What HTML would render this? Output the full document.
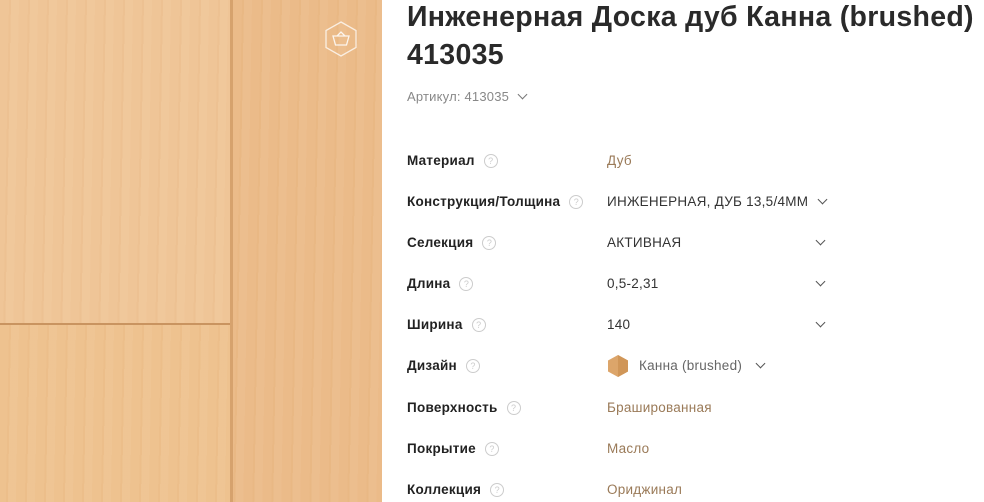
<!DOCTYPE html>
<html><head><meta charset="utf-8"><style>
body{margin:0;width:984px;height:502px;overflow:hidden;background:#fff;font-family:"Liberation Sans","DejaVu Sans",sans-serif;position:relative}
.wood{position:absolute;left:0;top:0;width:382px;height:502px;background:#e8b582}
.p{position:absolute;background-image:repeating-linear-gradient(91deg,rgba(255,255,255,0) 0 9px,rgba(200,130,60,.06) 9px 11px,rgba(255,240,220,.06) 11px 19px);}
.p1{left:0;top:0;width:230px;height:323px;background-color:#efc597}
.p2{left:0;top:325px;width:230px;height:177px;background-color:#eec28f}
.p3{left:233px;top:0;width:149px;height:502px;background-color:#ebbb89}
.seam{position:absolute;background:#c99460}
h1{position:absolute;left:407px;top:-2px;margin:0;font-size:28.5px;line-height:38px;font-weight:bold;color:#2a2a2a;letter-spacing:.3px}
.art{position:absolute;left:407px;top:89px;font-size:13px;color:#888;letter-spacing:.2px}
.row{position:absolute;left:407px;font-size:13.5px;height:20px;line-height:20px;letter-spacing:.25px}
.l{position:absolute;left:0;font-weight:bold;color:#222;white-space:nowrap}
.q{display:inline-block;width:12px;height:12px;border:1px solid #ccc;border-radius:50%;font-size:9px;line-height:12px;text-align:center;color:#ccc;font-weight:normal;margin-left:9px;vertical-align:1px;letter-spacing:0}
.v{position:absolute;left:200px;white-space:nowrap;color:#333}
.g{color:#9a7a58}
.c{position:absolute;left:410px;top:4px;width:6px;height:6px;border-right:1.3px solid #555;border-bottom:1.3px solid #555;transform:rotate(45deg)}
</style></head><body>
<div class="wood">
<div class="p p1"></div><div class="p p2"></div><div class="p p3"></div>
<div class="seam" style="left:0;top:323px;width:231px;height:2px"></div>
<div class="seam" style="left:230px;top:0;width:3px;height:502px;background:#d6a26d"></div>
<svg style="position:absolute;left:322px;top:20px" width="38" height="38" viewBox="0 0 38 38"><polygon points="19,2 34,10.5 34,27.5 19,36 4,27.5 4,10.5" fill="none" stroke="rgba(255,255,255,.75)" stroke-width="1.3"/><path d="M11 16h16l-2.5 9h-11z M15 16l4-4 4 4" fill="none" stroke="rgba(255,255,255,.85)" stroke-width="1.3"/></svg>
</div>
<h1>Инженерная Доска дуб Канна (brushed)<br>413035</h1>
<div class="art">Артикул: 413035 <span style="display:inline-block;width:6px;height:6px;border-right:1.3px solid #777;border-bottom:1.3px solid #777;transform:rotate(45deg);margin-left:6px;vertical-align:3px"></span></div>

<div class="row" style="top:151px"><span class="l">Материал<span class="q">?</span></span><span class="v g">Дуб</span></div>
<div class="row" style="top:192px"><span class="l">Конструкция/Толщина<span class="q">?</span></span><span class="v">ИНЖЕНЕРНАЯ, ДУБ 13,5/4ММ</span><span class="c" style="left:412px"></span></div>
<div class="row" style="top:233px"><span class="l">Селекция<span class="q">?</span></span><span class="v">АКТИВНАЯ</span><span class="c"></span></div>
<div class="row" style="top:274px"><span class="l">Длина<span class="q">?</span></span><span class="v">0,5-2,31</span><span class="c"></span></div>
<div class="row" style="top:315px"><span class="l">Ширина<span class="q">?</span></span><span class="v">140</span><span class="c"></span></div>
<div class="row" style="top:356px"><span class="l">Дизайн<span class="q">?</span></span>
<svg style="position:absolute;left:199px;top:-2px" width="24" height="24" viewBox="0 0 24 24"><polygon points="12,1 22,6.5 22,17.5 12,23 2,17.5 2,6.5" fill="#dca56a"/><polygon points="12,1 22,6.5 22,17.5 12,23" fill="#d09658"/></svg>
<span class="v" style="left:232px;color:#666">Канна (brushed)</span><span class="c" style="left:350px"></span></div>
<div class="row" style="top:398px"><span class="l">Поверхность<span class="q">?</span></span><span class="v g">Брашированная</span></div>
<div class="row" style="top:439px"><span class="l">Покрытие<span class="q">?</span></span><span class="v g">Масло</span></div>
<div class="row" style="top:480px"><span class="l">Коллекция<span class="q">?</span></span><span class="v g">Ориджинал</span></div>
</body></html>
